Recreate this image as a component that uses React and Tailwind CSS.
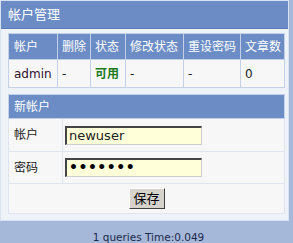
export default function App() {
  const cjk = { fontFamily: '"DejaVu Sans", "Noto Sans CJK SC", sans-serif' };
  return (
    <div className="w-[293px] h-[243px] bg-[#a6b8da] relative overflow-hidden" style={cjk}>
      <div className="w-[289px] h-[221px] bg-[#eef2f9] border border-[#d9e2f1]">
        <div className="h-[28px] bg-[#6b8cc5] text-white text-[13px] leading-[28px] pl-[7px] border-b border-[#5a7bb5]">帐户管理</div>
        <div className="px-[7px] pt-[4px]">
          <table className="w-[277px] border-collapse border border-[#8ea6d0] text-[12px]">
            <thead>
              <tr className="h-[26px] bg-[#6b8cc5] text-white text-left">
                <th className="font-normal pl-[5px] w-[49px] border border-[#c3d0e8]">帐户</th>
                <th className="font-normal pl-[4px] w-[33px] border border-[#c3d0e8]">删除</th>
                <th className="font-normal pl-[4px] w-[35px] border border-[#c3d0e8]">状态</th>
                <th className="font-normal pl-[4px] w-[58px] border border-[#c3d0e8]">修改状态</th>
                <th className="font-normal pl-[4px] w-[57px] border border-[#c3d0e8]">重设密码</th>
                <th className="font-normal pl-[4px] border border-[#c3d0e8]">文章数</th>
              </tr>
            </thead>
            <tbody>
              <tr className="h-[28px] bg-[#f7f7f8] text-[#222]">
                <td className="pl-[5px] border border-[#c3d0e8] text-[#301030]">admin</td>
                <td className="pl-[4px] border border-[#c3d0e8]">-</td>
                <td className="pl-[4px] border border-[#c3d0e8] font-bold text-[#1d7a1d]">可用</td>
                <td className="pl-[4px] border border-[#c3d0e8]">-</td>
                <td className="pl-[4px] border border-[#c3d0e8]">-</td>
                <td className="pl-[4px] border border-[#c3d0e8]">0</td>
              </tr>
            </tbody>
          </table>
          <table className="mt-[6px] w-[277px] border-collapse border border-[#8ea6d0] text-[12px]">
            <thead>
              <tr className="h-[24px] bg-[#6b8cc5] text-white text-left">
                <th colSpan={2} className="font-normal pl-[5px] border border-[#c3d0e8]">新帐户</th>
              </tr>
            </thead>
            <tbody className="bg-[#f7f7f8] text-[#222]">
              <tr className="h-[33px]">
                <td className="w-[54px] pl-[5px] border border-[#dfe4ee]">帐户</td>
                <td className="pl-[2px] border border-[#dfe4ee]">
                  <div className="w-[137px] h-[19px] bg-[#ffffd9] border-t-2 border-l-2 border-r border-b border-t-[#444] border-l-[#444] border-r-[#ccc] border-b-[#ccc] text-[13px] leading-[15px] pl-[2px] text-[#222]">newuser</div>
                </td>
              </tr>
              <tr className="h-[32px]">
                <td className="pl-[5px] border border-[#dfe4ee]">密码</td>
                <td className="pl-[2px] border border-[#dfe4ee]">
                  <div className="w-[137px] h-[19px] bg-[#ffffd9] border-t-2 border-l-2 border-r border-b border-t-[#444] border-l-[#444] border-r-[#ccc] border-b-[#ccc] text-[14px] leading-[15px] pl-[2px] text-black tracking-[0.5px] font-bold">•••••••</div>
                </td>
              </tr>
              <tr className="h-[30px]">
                <td colSpan={2} className="border border-[#dfe4ee] text-center">
                  <span className="inline-block w-[36px] h-[21px] bg-[#d6d3cc] border border-t-white border-l-white border-r-[#404040] border-b-[#404040] text-[13px] leading-[19px] text-black">保存</span>
                </td>
              </tr>
            </tbody>
          </table>
        </div>
      </div>
      <div className="text-center text-[10.5px] text-[#1b2a4a] mt-[9px] pl-[4px]">1 queries Time:0.049</div>
    </div>
  );
}
